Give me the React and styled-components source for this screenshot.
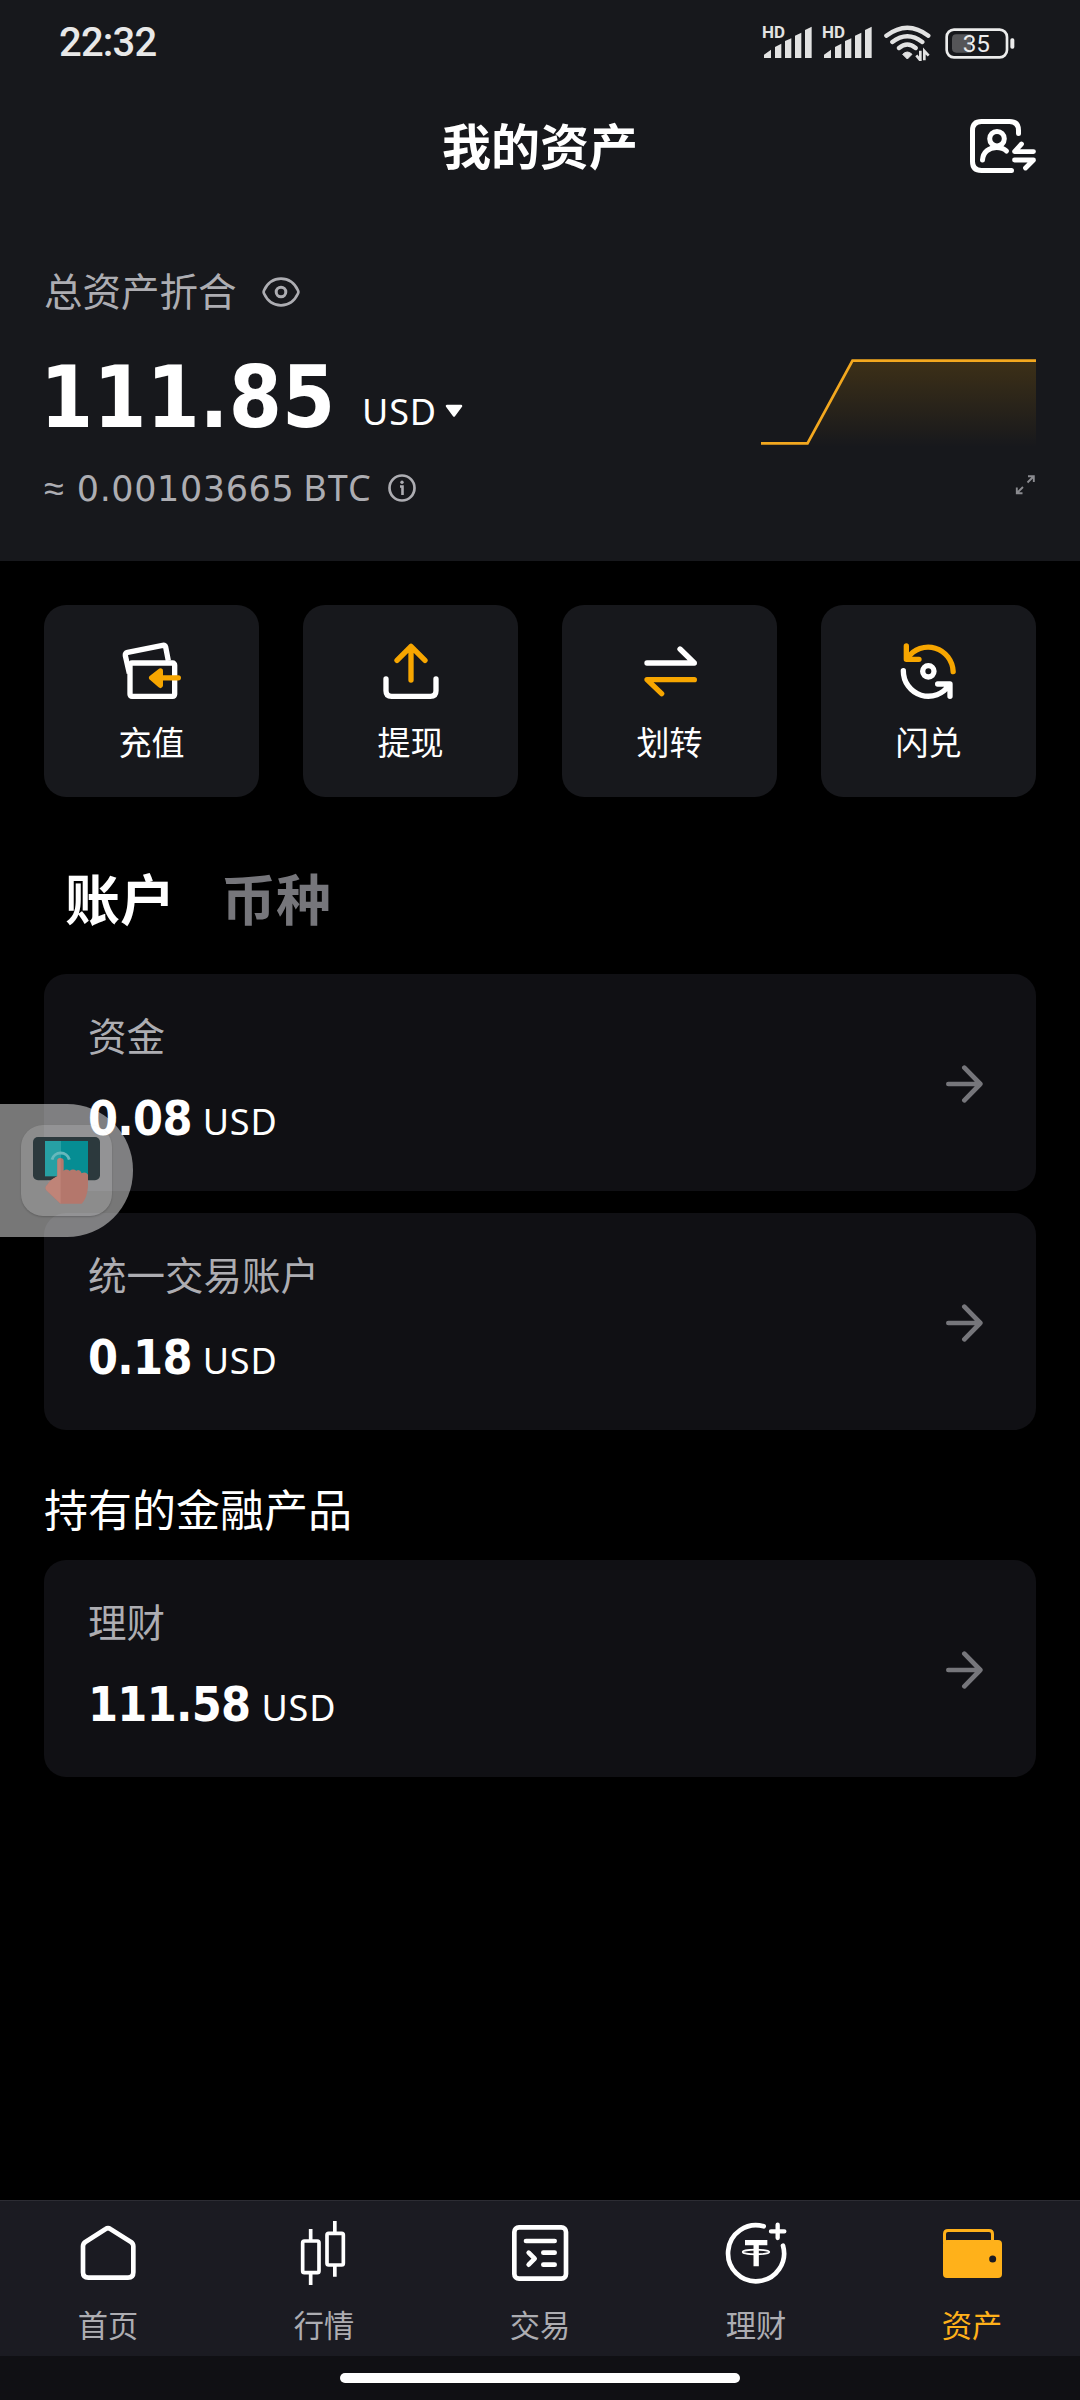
import React from "react";
import styled, { createGlobalStyle } from "styled-components";

const GlobalStyle = createGlobalStyle`
  * {
    box-sizing: border-box;
  }

  body {
    margin: 0;
    background: #000;
    color: #fff;
    font-family: "Noto Sans CJK SC", "Noto Sans", sans-serif;
  }

  svg {
    display: block;
    flex-shrink: 0;
  }
`;

const Page = styled.div`
  position: relative;
  display: flex;
  flex-direction: column;
  width: 1080px;
  height: 2400px;
  overflow: hidden;
  background: #000;
`;

const TopPanel = styled.header`
  height: 561px;
  background: #17181c;
`;

const StatusBar = styled.div`
  display: flex;
  align-items: center;
  justify-content: space-between;
  height: 86px;
  padding: 0 65px 0 59px;
`;

const Clock = styled.span`
  font-family: Roboto, sans-serif;
  font-size: 40px;
  font-weight: 500;
  line-height: 46px;
  letter-spacing: -0.8px;
  color: #e8e8e8;
`;

const StatusIcons = styled.div`
  display: flex;
  align-items: center;
`;

const BatterySvg = styled.svg`
  margin-left: 13px;
`;

const TitleBar = styled.div`
  display: grid;
  grid-template-columns: 1fr auto 1fr;
  align-items: center;
  height: 120px;
  padding: 0 44px;
`;

const Title = styled.h1`
  grid-column: 2;
  margin: 0;
  padding-bottom: 5px;
  font-size: 49px;
  font-weight: 700;
  line-height: 60px;
`;

const TitleAction = styled.div`
  justify-self: end;
`;

const Summary = styled.section`
  display: flex;
  justify-content: space-between;
  padding: 59px 44px 0;
`;

const SummaryLabel = styled.div`
  display: flex;
  align-items: center;
  gap: 25px;
  height: 54px;
  font-size: 38.5px;
  color: #adadb2;

  span {
    padding-bottom: 6px;
    line-height: 48px;
  }
`;

const TotalRow = styled.div`
  display: flex;
  align-items: baseline;
  height: 100px;
  margin: 29px 0 0 -4px;
`;

const Total = styled.span`
  font-family: "DejaVu Sans Condensed", "DejaVu Sans", sans-serif;
  font-stretch: condensed;
  font-size: 85px;
  font-weight: 700;
  line-height: 100px;
`;

const Currency = styled.span`
  margin-left: ${(props) => props.$gap}px;
  font-family: "Noto Sans", sans-serif;
  font-size: 36px;
  line-height: 36px;
  letter-spacing: 0.8px;
`;

const TotalCurrency = styled(Currency)`
  padding-bottom: 2px;
  transform: translateY(-2px);
`;

const CaretIcon = styled.svg`
  align-self: flex-start;
  margin: 56px 0 0 8px;
`;

const BtcRow = styled.div`
  display: flex;
  align-items: baseline;
  height: 44px;
  margin-top: 18px;
  font-family: "Noto Sans", sans-serif;
  font-size: 36px;
  line-height: 44px;
  letter-spacing: 1px;
  color: #adadb2;
`;

const BtcValue = styled.span`
  margin: 0 9px 0 12px;
  font-family: "DejaVu Sans", sans-serif;
  font-size: 35px;
  letter-spacing: 0.6px;
`;

const InfoIcon = styled.svg`
  align-self: center;
  margin-left: 16px;
`;

const ChartColumn = styled.div`
  display: flex;
  flex-direction: column;
  align-items: flex-end;
  padding-top: 92px;
  gap: 27px;
`;

const Actions = styled.nav`
  display: grid;
  grid-template-columns: repeat(4, 1fr);
  gap: 44px;
  padding: 44px 44px 0;
`;

const ActionCard = styled.div`
  display: flex;
  flex-direction: column;
  align-items: center;
  height: 192px;
  padding-top: 33px;
  border-radius: 22px;
  background: #17181c;
`;

const ActionLabel = styled.span`
  margin-top: 13px;
  font-size: 33px;
  line-height: 48px;
`;

const Tabs = styled.div`
  display: flex;
  gap: 46px;
  padding: 62px 65px 0;
`;

const Tab = styled.span`
  font-size: 55px;
  font-weight: 700;
  line-height: 74px;
  color: ${(props) => (props.$active ? "#fff" : "#76767b")};
`;

const CardList = styled.div`
  display: flex;
  flex-direction: column;
  gap: 22px;
  padding: 0 44px;
  margin-top: ${(props) => props.$top}px;
`;

const Card = styled.div`
  display: flex;
  align-items: center;
  justify-content: space-between;
  height: 217px;
  padding: 2px 53px 0 44px;
  border-radius: 22px;
  background: #101014;
`;

const CardText = styled.div`
  display: flex;
  flex-direction: column;
  height: 215px;
  padding-top: 31px;
`;

const CardName = styled.span`
  font-size: 38.5px;
  line-height: 54px;
  color: #adadb2;
`;

const CardAmount = styled.div`
  display: flex;
  align-items: baseline;
  margin-top: 29px;
`;

const Amount = styled.span`
  font-family: "DejaVu Sans Condensed", "DejaVu Sans", sans-serif;
  font-stretch: condensed;
  font-size: 48px;
  font-weight: 700;
  line-height: 56px;
  letter-spacing: -0.7px;
`;

const SectionTitle = styled.h2`
  margin: 48px 44px 0;
  font-size: 44px;
  font-weight: 400;
  line-height: 60px;
`;

const BottomBar = styled.footer`
  display: grid;
  grid-template-columns: repeat(5, 1fr);
  height: 156px;
  margin-top: auto;
  border-top: 1px solid #2c2c33;
  background: #1b1b22;
`;

const NavItem = styled.div`
  display: flex;
  flex-direction: column;
  align-items: center;
  padding-top: 19px;
  font-size: 30.25px;
  line-height: 44px;
  color: ${(props) => (props.$active ? "#ffb11a" : "#adadb2")};

  span {
    margin-top: 16px;
  }
`;

const GestureArea = styled.div`
  display: flex;
  justify-content: center;
  height: 44px;
  padding-top: 17px;
  background: #101014;
`;

const GestureBar = styled.div`
  width: 400px;
  height: 10px;
  border-radius: 5px;
  background: #fff;
`;

const FloatingTouch = styled.div`
  position: absolute;
  top: 1104px;
  left: 0;
  width: 133px;
  height: 133px;
  padding: 21px;
  border-radius: 0 66px 66px 0;
  background: rgba(255, 255, 255, 0.465);
`;

const TouchTile = styled.div`
  width: 91px;
  height: 91px;
  padding: 12px;
  border-radius: 22px;
  background: rgba(255, 255, 255, 0.16);
  box-shadow: 0 1px 2px rgba(0, 0, 0, 0.2);
`;

// Icons are drawn on a 3x grid: 198 units for 66px
const Icon = ({ children }) => (
  <svg
    width="66"
    height="66"
    viewBox="0 0 198 198"
    fill="none"
    stroke="#fff"
    strokeWidth="16"
    strokeLinecap="round"
    strokeLinejoin="round"
    overflow="visible"
  >
    {children}
  </svg>
);

const ORANGE = "#f7a600";

const DepositIcon = () => (
  <Icon>
    <path d="M31 106 L19 53 Q18 45 26 43 L131 22 Q138 21 140 27 L148 68" strokeLinecap="butt" />
    <rect x="33" y="75" width="134" height="100" rx="6" />
    <path d="M178 119.5 H104" stroke={ORANGE} />
    <path d="M124 99 L98 119.5 L124 142 Z" stroke={ORANGE} fill={ORANGE} />
  </Icon>
);

const WithdrawIcon = () => (
  <Icon>
    <path d="M24 123 V158 Q24 175 41 175 H157 Q174 175 174 158 V123" />
    <path d="M99 126 V25 M57 67 L99 25 L141 67" stroke={ORANGE} />
  </Icon>
);

const TransferIcon = () => (
  <Icon>
    <path d="M30 75 H172 L129 33" />
    <path d="M172 125 H30 L74 167" stroke={ORANGE} />
  </Icon>
);

const ConvertIcon = () => (
  <Icon>
    <circle cx="97" cy="100" r="17" />
    <path d="M171.500 101 A75 76 0 0 0 35 60 M31 24 V64 H69" stroke={ORANGE} />
    <path d="M22 98 A75 76 0 0 0 160 140 M125 138 H162 V175" />
  </Icon>
);

const HomeIcon = () => (
  <Icon>
    <path
      strokeWidth="14"
      d="M24 79 Q24 71 31 66 L92 27 Q99 22 106 27 L168 66 Q175 71 175 79 V157 Q175 173 159 173 H40 Q24 173 24 157 Z"
    />
  </Icon>
);

const MarketIcon = () => (
  <Icon>
    <g strokeWidth="11">
      <rect x="35" y="63" width="49" height="95" rx="5" />
      <rect x="108" y="40" width="49" height="95" rx="5" />
      <path
        strokeLinecap="butt"
        d="M59 27 V60 M59 160 V195 M131.500 3 V38 M131.500 138 V170"
      />
    </g>
  </Icon>
);

const TradeIcon = () => (
  <Icon>
    <g strokeWidth="14">
      <rect x="22" y="22" width="155" height="154" rx="14" />
      <path d="M57 63 H143 M109 98 H143 M109 134 H143 M65 98 L83 116 L65 134" />
    </g>
  </Icon>
);

const EarnIcon = () => (
  <Icon>
    <path strokeWidth="14" d="M122 19 A84 84 0 1 0 180 77" />
    <path strokeWidth="13" d="M164 14 V54 M144 34 H184" />
    <ellipse cx="99" cy="96" rx="40" ry="7" strokeWidth="5" />
    <path strokeWidth="16" strokeLinecap="butt" d="M66 68 H133 M99.500 68 V139" />
  </Icon>
);

const AssetsIcon = () => (
  <Icon>
    <path
      d="M16.500 66 V42 Q16.500 31.500 27 31.500 H150 Q160.500 31.500 160.500 42 V66"
      stroke="#ffb11a"
      strokeWidth="9"
    />
    <rect x="12" y="60" width="177" height="114" rx="12" fill="#ffb11a" stroke="none" />
    <circle cx="161" cy="117" r="10.500" fill="#1b1b22" stroke="none" />
  </Icon>
);

const SignalIcon = () => (
  <svg width="60" height="42" viewBox="0 -9 180 126" fill="#e2e2e2" overflow="visible">
    <text
      x="0"
      y="39"
      textLength="69"
      lengthAdjust="spacingAndGlyphs"
      fontFamily="Roboto, sans-serif"
      fontSize="48"
      fontWeight="700"
    >
      HD
    </text>
    <path d="M6 89 L27 74 V99 H6 Z M39 66 L58 56 V99 H39 Z M69 48 L88 40 V99 H69 Z M99 32 L118 23 V99 H99 Z M129 15 L149 5 V99 H129 Z" />
  </svg>
);

const WifiIcon = () => (
  <svg width="50" height="36" viewBox="0 0 150 108" fill="none" stroke="#e2e2e2">
    <path
      strokeWidth="13"
      strokeLinecap="round"
      d="M13 32 Q76 -16 139 32 M31 51 Q76 16 121 51 M51 69 Q76 48 101 69"
    />
    <path d="M62 88 Q76 74 90 88 L76 102 Z" fill="#e2e2e2" strokeWidth="3" strokeLinejoin="round" />
    <path d="M115 77 V106 L103 91 M127 106 V78 L140 92" strokeWidth="8" />
  </svg>
);

const BatteryIcon = () => (
  <BatterySvg width="70" height="31" viewBox="0 0 210 93" fill="none">
    <rect x="5" y="5" width="181" height="83" rx="22" stroke="#ececec" strokeWidth="8" />
    <path d="M78 19 H34 Q21 19 21 32 V61 Q21 74 34 74 H78 Z" fill="#555558" />
    <rect x="196" y="31" width="12" height="31" rx="5" fill="#ececec" />
    <text
      x="94"
      y="73"
      textAnchor="middle"
      fill="#ececec"
      fontFamily="Roboto, sans-serif"
      fontSize="73"
      fontWeight="400"
    >
      35
    </text>
  </BatterySvg>
);

const AccountSwitchIcon = () => (
  <svg
    width="68"
    height="58"
    viewBox="0 0 68 58"
    fill="none"
    stroke="#fff"
    strokeWidth="5"
    strokeLinecap="round"
    strokeLinejoin="round"
  >
    <path d="M50.500 16.500 V13.500 Q50.500 4.500 41.500 4.500 H13.500 Q4.500 4.500 4.500 13.500 V44.500 Q4.500 53.500 13.500 53.500 H43.500" />
    <circle cx="29" cy="21.700" r="7.300" />
    <path d="M14.500 43 C15 35 21 30.500 28.500 30.500 C33 30.500 36 31.500 38.500 34" />
    <path d="M65.500 34.600 H46.500 L53.500 27 M46.500 43 H65.500 L57.500 51" strokeWidth="4.800" />
  </svg>
);

const EyeIcon = () => (
  <svg width="38" height="30" viewBox="0 0 38 30" fill="none" stroke="#adadb2">
    <path
      strokeWidth="2.700"
      strokeLinejoin="round"
      d="M2 13.500 C5.500 6 11.500 1.700 19 1.700 S32.500 6 36 13.500 Q36.700 15 36 16.500 C32.500 24 26.500 28.300 19 28.300 S5.500 24 2 16.500 Q1.300 15 2 13.500 Z"
    />
    <circle cx="19" cy="15" r="4.800" strokeWidth="3" />
  </svg>
);

const BalanceChart = () => (
  <svg width="275" height="90" viewBox="0 0 275 90" fill="none">
    <defs>
      <linearGradient id="area" x1="0" y1="0" x2="0" y2="1">
        <stop offset="0" stopColor={ORANGE} stopOpacity="0.17" />
        <stop offset="1" stopColor={ORANGE} stopOpacity="0" />
      </linearGradient>
    </defs>
    <path d="M0 86.300 H46.500 L91.500 3.600 H275 V90 H0 Z" fill="url(#area)" />
    <path d="M0 86.300 H46.500 L91.500 3.600 H275" stroke="#f3a81f" strokeWidth="2.700" />
  </svg>
);

const ExpandIcon = () => (
  <svg width="21" height="21" viewBox="0 0 21 21" fill="none" stroke="#8b8b90" strokeWidth="1.900">
    <path d="M12.500 8.500 L18.500 2.500 M13 2.200 H18.800 V8 M8 13 L2 19 M1.800 13.500 V19.200 H7.500" />
  </svg>
);

const ArrowIcon = () => (
  <svg
    width="37"
    height="38"
    viewBox="0 0 111 114"
    fill="none"
    stroke="#76767b"
    strokeWidth="14"
    strokeLinecap="round"
    strokeLinejoin="round"
  >
    <path d="M7 57 H103 M55 8 L103 57 L55 106" />
  </svg>
);

const TouchIcon = () => (
  <svg width="67" height="67" viewBox="0 0 201 201">
    <rect y="0" width="201" height="130" rx="15" fill="#2c393d" />
    <path d="M36 12 H84 V118 H36 Z" fill="#27a0a4" />
    <path d="M84 12 H165 V118 H84 Z" fill="#068d93" />
    <path d="M57 68 A27 27 0 0 1 109 68" fill="none" stroke="#66b8bc" strokeWidth="9" />
    <path
      d="M73 118 V71 Q73 63 82 63 Q92 63 92 71 V101 Q100 94 110 101 Q120 94 130 101 Q140 94 146 109 Q158 103 165 113 V150 Q162 184 146 200 H82 L40 160 Q34 150 43 143 Q53 127 73 118 Z"
      fill="#b4776c"
    />
    <path
      d="M73 118 V71 Q73 63 83 63 V200 L40 160 Q34 150 43 143 Q53 127 73 118 Z"
      fill="#bf8478"
    />
  </svg>
);

const actions = [
  { label: "充值", icon: DepositIcon },
  { label: "提现", icon: WithdrawIcon },
  { label: "划转", icon: TransferIcon },
  { label: "闪兑", icon: ConvertIcon },
];

const accounts = [
  { name: "资金", amount: "0.08" },
  { name: "统一交易账户", amount: "0.18" },
];

const products = [{ name: "理财", amount: "111.58" }];

const navItems = [
  { label: "首页", icon: HomeIcon },
  { label: "行情", icon: MarketIcon },
  { label: "交易", icon: TradeIcon },
  { label: "理财", icon: EarnIcon },
  { label: "资产", icon: AssetsIcon, active: true },
];

const AccountCard = ({ account }) => (
  <Card>
    <CardText>
      <CardName>{account.name}</CardName>
      <CardAmount>
        <Amount>{account.amount}</Amount>
        <Currency $gap={11}>USD</Currency>
      </CardAmount>
    </CardText>
    <ArrowIcon />
  </Card>
);

const App = () => {
  return (
    <Page>
      <GlobalStyle />
      <TopPanel>
        <StatusBar>
          <Clock>22:32</Clock>
          <StatusIcons>
            <SignalIcon />
            <SignalIcon />
            <WifiIcon />
            <BatteryIcon />
          </StatusIcons>
        </StatusBar>
        <TitleBar>
          <Title>我的资产</Title>
          <TitleAction>
            <AccountSwitchIcon />
          </TitleAction>
        </TitleBar>
        <Summary>
          <div>
            <SummaryLabel>
              <span>总资产折合</span>
              <EyeIcon />
            </SummaryLabel>
            <TotalRow>
              <Total>111.85</Total>
              <TotalCurrency $gap={27}>USD</TotalCurrency>
              <CaretIcon width="18" height="14" viewBox="0 0 18 14">
                <path
                  d="M2 2 H16 L9 11.500 Z"
                  fill="#fff"
                  stroke="#fff"
                  strokeWidth="2.500"
                  strokeLinejoin="round"
                />
              </CaretIcon>
            </TotalRow>
            <BtcRow>
              ≈<BtcValue>0.00103665</BtcValue>BTC
              <InfoIcon width="28" height="28" viewBox="0 0 28 28">
                <circle cx="14" cy="14" r="12.500" fill="none" stroke="#adadb2" strokeWidth="2.700" />
                <path d="M12 12.500 H14.500 V21" fill="none" stroke="#adadb2" strokeWidth="2.600" />
                <circle cx="14" cy="8.200" r="1.700" fill="#adadb2" />
              </InfoIcon>
            </BtcRow>
          </div>
          <ChartColumn>
            <BalanceChart />
            <ExpandIcon />
          </ChartColumn>
        </Summary>
      </TopPanel>

      <Actions>
        {actions.map(({ label, icon: ActionIcon }) => (
          <ActionCard key={label}>
            <ActionIcon />
            <ActionLabel>{label}</ActionLabel>
          </ActionCard>
        ))}
      </Actions>

      <Tabs>
        <Tab $active>账户</Tab>
        <Tab>币种</Tab>
      </Tabs>

      <CardList $top={41}>
        {accounts.map((account) => (
          <AccountCard key={account.name} account={account} />
        ))}
      </CardList>

      <SectionTitle>持有的金融产品</SectionTitle>
      <CardList $top={22}>
        {products.map((account) => (
          <AccountCard key={account.name} account={account} />
        ))}
      </CardList>

      <BottomBar>
        {navItems.map(({ label, icon: NavIcon, active }) => (
          <NavItem key={label} $active={active}>
            <NavIcon />
            <span>{label}</span>
          </NavItem>
        ))}
      </BottomBar>
      <GestureArea>
        <GestureBar />
      </GestureArea>

      <FloatingTouch>
        <TouchTile>
          <TouchIcon />
        </TouchTile>
      </FloatingTouch>
    </Page>
  );
};

export default App;
